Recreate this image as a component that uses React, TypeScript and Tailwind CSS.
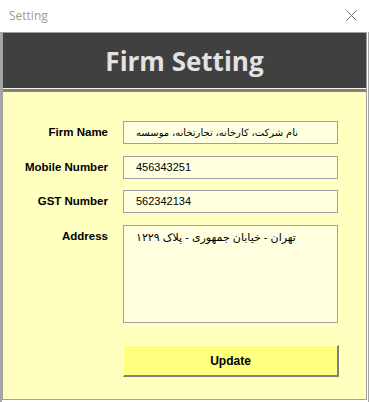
const rows = [
	{ label: "Firm Name", value: "نام شرکت، کارخانه، تجارتخانه، موسسه", small: true },
	{ label: "Mobile Number", value: "456343251", small: false },
	{ label: "GST Number", value: "562342134", small: false },
];

const App = () => {
	return (
		<div className="w-[369px] h-[402px] bg-white flex flex-col overflow-hidden">
			<div className="h-[32px] flex items-center justify-between pl-[9px] pr-[12px] shrink-0">
				<span className="text-[12px] text-[#9a9a9a] font-['Open_Sans',sans-serif] -mt-[1px]">
					Setting
				</span>
				<svg width="11" height="11" viewBox="0 0 11 11" className="-mt-[1px]">
					<path d="M0.5 0.5 L10.5 10.5 M10.5 0.5 L0.5 10.5" stroke="#6b6b6b" strokeWidth="1" />
				</svg>
			</div>
			<div className="flex-1 border-l-2 border-r border-[#a6a6a6] bg-white pr-[1px] pb-[2px] flex">
				<div className="flex-1 border border-[#a0a0a0] flex flex-col">
					<div className="h-[55px] bg-[#404040] flex items-center justify-center shrink-0">
						<span className="text-[26px] font-bold text-[#e2e2e2] font-['Open_Sans',sans-serif] leading-none">
							Firm Setting
						</span>
					</div>
					<div className="h-[1px] bg-[#f4f4e0] shrink-0" />
					<div className="h-[3px] bg-[#808080] shrink-0" />
					<div className="flex-1 bg-[#ffffc0] pt-[29px] flex flex-col font-['Liberation_Sans','DejaVu_Sans',sans-serif]">
						{rows.map((r, i) => (
							<div
								key={r.label}
								className={`flex items-center ${i === 0 ? "" : i === 2 ? "mt-[11px]" : "mt-[12px]"}`}
							>
								<div className="w-[105px] text-right text-[11.5px] font-bold text-black">
									{r.label}
								</div>
								<div
									className={`ml-[15px] w-[215px] h-[23px] bg-[#ffffe0] border border-[#a0a0a0] flex items-center pl-[12px] text-black ${r.small ? "text-[10px]" : "text-[11px]"}`}
								>
									{r.value}
								</div>
							</div>
						))}
						<div className="flex items-start mt-[12px]">
							<div className="w-[105px] text-right text-[11.5px] font-bold text-black pt-[3px]">
								Address
							</div>
							<div className="ml-[15px] w-[215px] h-[98px] bg-[#ffffe0] border border-[#a0a0a0] pl-[12px] pt-[4px] text-[11px] text-black leading-[14px]">
								تهران - خیابان جمهوری - پلاک ۱۲۲۹
							</div>
						</div>
						<div className="flex mt-[22px]">
							<div className="w-[105px]" />
							<button className="ml-[15px] w-[216px] h-[32px] bg-[#ffff80] border-t border-l border-t-white border-l-white border-b-2 border-r-2 border-b-[#808080] border-r-[#808080] text-[12px] font-bold text-black">
								Update
							</button>
						</div>
					</div>
				</div>
			</div>
		</div>
	);
};

export default App;
